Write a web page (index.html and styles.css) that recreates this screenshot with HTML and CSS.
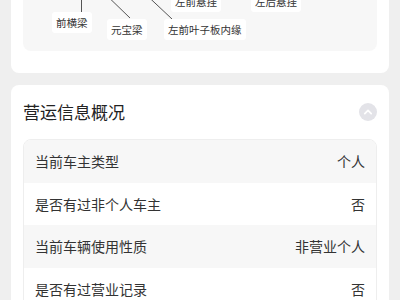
FILE: index.html
```html
<!DOCTYPE html>
<html lang="zh-CN">
<head>
    <meta charset="UTF-8">
    <meta name="viewport" content="width=device-width, initial-scale=1.0">
    <title>营运信息概况</title>
    <link rel="stylesheet" href="styles.css">
</head>
<body>
    <div class="page">
        <div class="card diagram-card">
            <div class="diagram">
                <svg class="lines" width="354" height="51" viewBox="0 0 354 51">
                    <line x1="58.5" y1="-10" x2="58.5" y2="12" />
                    <line x1="76" y1="-12" x2="107" y2="18" />
                    <line x1="116" y1="-12" x2="149" y2="19" />
                </svg>
                <span class="tag tag-front-beam">前横梁</span>
                <span class="tag tag-yuanbao">元宝梁</span>
                <span class="tag tag-fender">左前叶子板内缘</span>
                <span class="tag tag-front-susp">左前悬挂</span>
                <span class="tag tag-rear-susp">左后悬挂</span>
            </div>
        </div>

        <div class="card info-card">
            <div class="card-header">
                <h2>营运信息概况</h2>
                <span class="toggle">
                    <svg width="18" height="18" viewBox="0 0 18 18">
                        <circle cx="9" cy="9" r="9" fill="#e3e3e8" />
                        <path d="M5.8 10.6 L9 7.4 L12.2 10.6" fill="none" stroke="#fff" stroke-width="1.8" stroke-linecap="round" stroke-linejoin="round" />
                    </svg>
                </span>
            </div>
            <div class="info-table">
                <div class="row"><span>当前车主类型</span><span>个人</span></div>
                <div class="row"><span>是否有过非个人车主</span><span>否</span></div>
                <div class="row"><span>当前车辆使用性质</span><span>非营业个人</span></div>
                <div class="row"><span>是否有过营业记录</span><span>否</span></div>
                <div class="row"><span>是否有过营运车辆登记</span><span>否</span></div>
            </div>
        </div>
    </div>
</body>
</html>
```

FILE: styles.css
```css
body {
    margin: 0;
    background: #efefef;
    font-family: "Noto Sans CJK SC", "Noto Sans", sans-serif;
    color: #333;
}
.page {
    padding: 0 11px;
}
.card {
    background: #fff;
    border-radius: 8px;
}
.diagram-card {
    border-radius: 0 0 8px 8px;
    padding: 0 12px 22px;
}
.diagram {
    position: relative;
    height: 51px;
    background: #f7f7f7;
    border-radius: 0 0 8px 8px;
}
.lines {
    position: absolute;
    left: 0;
    top: 0;
    overflow: visible;
}
.lines line {
    stroke: #555;
    stroke-width: 1;
}
.tag {
    position: absolute;
    background: #fff;
    border-radius: 3px;
    font-size: 10.5px;
    line-height: 21px;
    padding: 0 4px;
    color: #333;
    white-space: nowrap;
}
.tag-front-beam { left: 29px; top: 12px; }
.tag-yuanbao { left: 84px; top: 19px; }
.tag-fender { left: 141px; top: 19px; }
.tag-front-susp { left: 148px; top: -9px; }
.tag-rear-susp { left: 228px; top: -9px; }

.info-card {
    margin-top: 12px;
    padding: 15px 12px 12px;
}
.card-header {
    display: flex;
    justify-content: space-between;
    align-items: center;
    margin-bottom: 15px;
}
h2 {
    margin: 0;
    font-size: 17px;
    font-weight: 400;
    line-height: 24px;
    color: #222;
}
.toggle {
    display: flex;
    margin-right: 0;
}
.info-table {
    border: 1px solid #eeeeee;
    border-radius: 8px;
    overflow: hidden;
}
.row {
    display: flex;
    justify-content: space-between;
    align-items: center;
    height: 42.5px;
    padding: 0 11px;
    font-size: 14px;
    color: #333;
}
.row:nth-child(odd) {
    background: #f7f7f7;
}
```
